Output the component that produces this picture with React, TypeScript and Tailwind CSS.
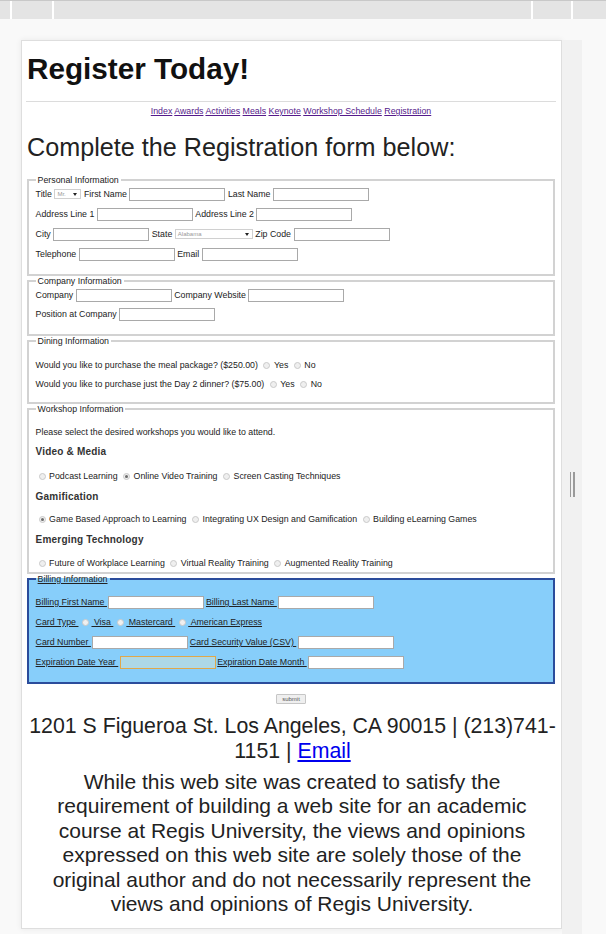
import React from "react";

function Inp({ focus = false }: { focus?: boolean }) {
  return focus ? (
    <span className="inline-block w-[96px] h-[13px] shrink-0 bg-[#add8e6] border border-[#e0a849]" />
  ) : (
    <span className="inline-block w-[96px] h-[13px] shrink-0 bg-white border border-[#a9a9a9]" />
  );
}

function Caret() {
  return (
    <svg width="4" height="3" viewBox="0 0 4 3" className="shrink-0">
      <path d="M0 0 H4 L2 3 Z" fill="#222" />
    </svg>
  );
}

function Sel({ wide = false, text }: { wide?: boolean; text: string }) {
  return wide ? (
    <span className="inline-flex items-center justify-between w-[78px] h-[10px] shrink-0 bg-white border border-[#d0d0d0] pl-[2px] pr-[3px]">
      <span className="text-[6px] leading-none text-[#999]">{text}</span>
      <Caret />
    </span>
  ) : (
    <span className="inline-flex items-center justify-between w-[27px] h-[10px] shrink-0 bg-white border border-[#d0d0d0] pl-[2px] pr-[3px]">
      <span className="text-[6px] leading-none text-[#999]">{text}</span>
      <Caret />
    </span>
  );
}

function Radio({ checked = false }: { checked?: boolean }) {
  return (
    <span className="ml-[3px] mr-[1px] inline-flex items-center justify-center w-[7px] h-[7px] shrink-0 rounded-full border border-[#c9c9c9] bg-[#efefef]">
      {checked ? <span className="w-[3px] h-[3px] rounded-full bg-[#6b6b6b]" /> : null}
    </span>
  );
}

function Legend({ children, underline = false }: { children: React.ReactNode; underline?: boolean }) {
  return (
    <legend className={"px-[2px] text-[8.8px] leading-[10px] text-[#222]" + (underline ? " underline" : "")}>
      {children}
    </legend>
  );
}

function U({ children }: { children: React.ReactNode }) {
  return <span className="underline">{children}</span>;
}

export default function App() {
  return (
    <div className="min-h-[934px] bg-[#f9f9f9] font-['Liberation_Sans',Arial,sans-serif] overflow-hidden">
      {/* top ruler bar */}
      <div className="h-[19px] border-t border-[#c8c8c8] bg-[#e4e4e4] flex">
        <div className="ml-[10px] w-[2px] h-full bg-white" />
        <div className="ml-[40px] w-[2px] h-full bg-white" />
        <div className="ml-[477px] w-[2px] h-full bg-white" />
        <div className="ml-[38px] w-[2px] h-full bg-white" />
      </div>

      <div className="flex items-start mt-[21px]">
        {/* page card */}
        <div className="ml-[21px] w-[541px] shrink-0 bg-white border border-[#dedede] shadow-[0_0_6px_rgba(0,0,0,0.07)] pl-[3px] pr-[4px] pb-[12px]">
          <div className="pt-[11px] pl-[2px]">
            <h1 className="text-[29.7px] leading-[33px] font-bold text-[#111]">Register Today!</h1>
          </div>
          <div className="mt-[16px] mx-[1px] h-px bg-[#dcdcdc]" />
          <nav className="mt-[4px] h-[10px] leading-[10px] text-center text-[8.8px] text-[#551a8b]">
            <a className="underline">Index</a> <a className="underline">Awards</a>{" "}
            <a className="underline">Activities</a> <a className="underline">Meals</a>{" "}
            <a className="underline">Keynote</a> <a className="underline">Workshop Schedule</a>{" "}
            <a className="underline">Registration</a>
          </nav>
          <h2 className="mt-[17px] pl-[2px] text-[25.2px] leading-[29px] text-[#222]">
            Complete the Registration form below:
          </h2>

          <form className="mt-[13px] text-[8.8px] leading-[10px] text-[#222]">
            {/* Personal */}
            <fieldset className="mx-[2px] border-2 border-[#d2d2d2] px-[6.6px] pt-0 pb-[15px]">
              <Legend>Personal Information</Legend>
              <div className="mt-[4px] h-[10px] flex items-center gap-[2.5px] whitespace-nowrap">
                <span>Title</span>
                <Sel text="Mr." />
                <span>First Name</span>
                <Inp />
                <span>Last Name</span>
                <Inp />
              </div>
              <div className="mt-[10px] h-[10px] flex items-center gap-[2.5px] whitespace-nowrap">
                <span>Address Line 1</span>
                <Inp />
                <span>Address Line 2</span>
                <Inp />
              </div>
              <div className="mt-[10px] h-[10px] flex items-center gap-[2.5px] whitespace-nowrap">
                <span>City</span>
                <Inp />
                <span>State</span>
                <Sel wide text="Alabama" />
                <span>Zip Code</span>
                <Inp />
              </div>
              <div className="mt-[10px] h-[10px] flex items-center gap-[2.5px] whitespace-nowrap">
                <span>Telephone</span>
                <Inp />
                <span>Email</span>
                <Inp />
              </div>
            </fieldset>

            {/* Company */}
            <fieldset className="mx-[2px] border-2 border-[#d2d2d2] px-[6.6px] pt-0 pb-[15px]">
              <Legend>Company Information</Legend>
              <div className="mt-[4px] h-[10px] flex items-center gap-[2.5px] whitespace-nowrap">
                <span>Company</span>
                <Inp />
                <span>Company Website</span>
                <Inp />
              </div>
              <div className="mt-[9px] h-[10px] flex items-center gap-[2.5px] whitespace-nowrap">
                <span>Position at Company</span>
                <Inp />
              </div>
            </fieldset>

            {/* Dining */}
            <fieldset className="mx-[2px] border-2 border-[#d2d2d2] px-[6.6px] pt-0 pb-[13px]">
              <Legend>Dining Information</Legend>
              <div className="mt-[14px] h-[10px] flex items-center gap-[2.5px] whitespace-nowrap">
                <span>Would you like to purchase the meal package? ($250.00)</span>
                <Radio />
                <span>Yes</span>
                <Radio />
                <span>No</span>
              </div>
              <div className="mt-[9px] h-[10px] flex items-center gap-[2.5px] whitespace-nowrap">
                <span>Would you like to purchase just the Day 2 dinner? ($75.00)</span>
                <Radio />
                <span>Yes</span>
                <Radio />
                <span>No</span>
              </div>
            </fieldset>

            {/* Workshop */}
            <fieldset className="mx-[2px] border-2 border-[#d2d2d2] px-[6.6px] pt-0 pb-[4px]">
              <Legend>Workshop Information</Legend>
              <div className="mt-[13px] h-[10px] flex items-center whitespace-nowrap">
                <span>Please select the desired workshops you would like to attend.</span>
              </div>
              <div className="mt-[10px] h-[10px] flex items-center whitespace-nowrap">
                <span className="text-[10px] font-bold tracking-[0.2px] text-[#333]">Video &amp; Media</span>
              </div>
              <div className="mt-[14px] h-[10px] flex items-center gap-[2.5px] whitespace-nowrap">
                <Radio />
                <span>Podcast Learning</span>
                <Radio checked />
                <span>Online Video Training</span>
                <Radio />
                <span>Screen Casting Techniques</span>
              </div>
              <div className="mt-[11px] h-[10px] flex items-center whitespace-nowrap">
                <span className="text-[10px] font-bold tracking-[0.2px] text-[#333]">Gamification</span>
              </div>
              <div className="mt-[12px] h-[10px] flex items-center gap-[2.5px] whitespace-nowrap">
                <Radio checked />
                <span>Game Based Approach to Learning</span>
                <Radio />
                <span>Integrating UX Design and Gamification</span>
                <Radio />
                <span>Building eLearning Games</span>
              </div>
              <div className="mt-[11px] h-[10px] flex items-center whitespace-nowrap">
                <span className="text-[10px] font-bold tracking-[0.2px] text-[#333]">Emerging Technology</span>
              </div>
              <div className="mt-[13px] h-[10px] flex items-center gap-[2.5px] whitespace-nowrap">
                <Radio />
                <span>Future of Workplace Learning</span>
                <Radio />
                <span>Virtual Reality Training</span>
                <Radio />
                <span>Augmented Reality Training</span>
              </div>
            </fieldset>

            {/* Billing */}
            <fieldset className="mx-[2px] border-2 border-[#2b4c9b] bg-[#87cefa] px-[6.6px] pt-0 pb-[15px]">
              <Legend underline>Billing Information</Legend>
              <div className="mt-[13px] h-[10px] flex items-center gap-[1.5px] whitespace-nowrap">
                <U>Billing First Name&nbsp;</U>
                <Inp />
                <U>Billing Last Name&nbsp;</U>
                <Inp />
              </div>
              <div className="mt-[10px] h-[10px] flex items-center gap-[1px] whitespace-nowrap">
                <U>Card Type&nbsp;</U>
                <Radio />
                <U>&nbsp;Visa&nbsp;</U>
                <Radio />
                <U>&nbsp;Mastercard&nbsp;</U>
                <Radio />
                <U>&nbsp;American Express</U>
              </div>
              <div className="mt-[10px] h-[10px] flex items-center gap-[1.5px] whitespace-nowrap">
                <U>Card Number&nbsp;</U>
                <Inp />
                <U>Card Security Value (CSV)&nbsp;</U>
                <Inp />
              </div>
              <div className="mt-[10px] h-[10px] flex items-center gap-[1.5px] whitespace-nowrap">
                <U>Expiration Date Year&nbsp;</U>
                <Inp focus />
                <U>Expiration Date Month&nbsp;</U>
                <Inp />
              </div>
            </fieldset>

            <div className="mt-[10px] flex justify-center">
              <button
                type="button"
                className="w-[30px] h-[10px] flex items-center justify-center text-[6px] leading-none text-[#555] bg-[#efefef] border border-[#c6c6c6] rounded-[1px]"
              >
                submit
              </button>
            </div>
          </form>

          <p className="mt-[10px] pl-[3px] text-center text-[21.3px] leading-[24.5px] text-[#222]">
            1201 S Figueroa St. Los Angeles, CA 90015 | (213)741-1151 |{" "}
            <a className="text-[#0000ee] underline">Email</a>
          </p>
          <p className="mt-[7px] pl-[2px] text-center text-[21px] leading-[24.4px] text-[#222]">
            While this web site was created to satisfy the requirement of building a web site for an
            academic course at Regis University, the views and opinions expressed on this web site are
            solely those of the original author and do not necessarily represent the views and opinions
            of Regis University.
          </p>
        </div>

        {/* resize strip */}
        <div className="w-[20px] h-[894px] shrink-0 bg-[#f1f1f1] flex justify-center gap-[2px] pt-[432px]">
          <div className="w-[1.5px] h-[25px] bg-[#9a9a9a]" />
          <div className="w-[1.5px] h-[25px] bg-[#9a9a9a]" />
        </div>
      </div>
    </div>
  );
}
